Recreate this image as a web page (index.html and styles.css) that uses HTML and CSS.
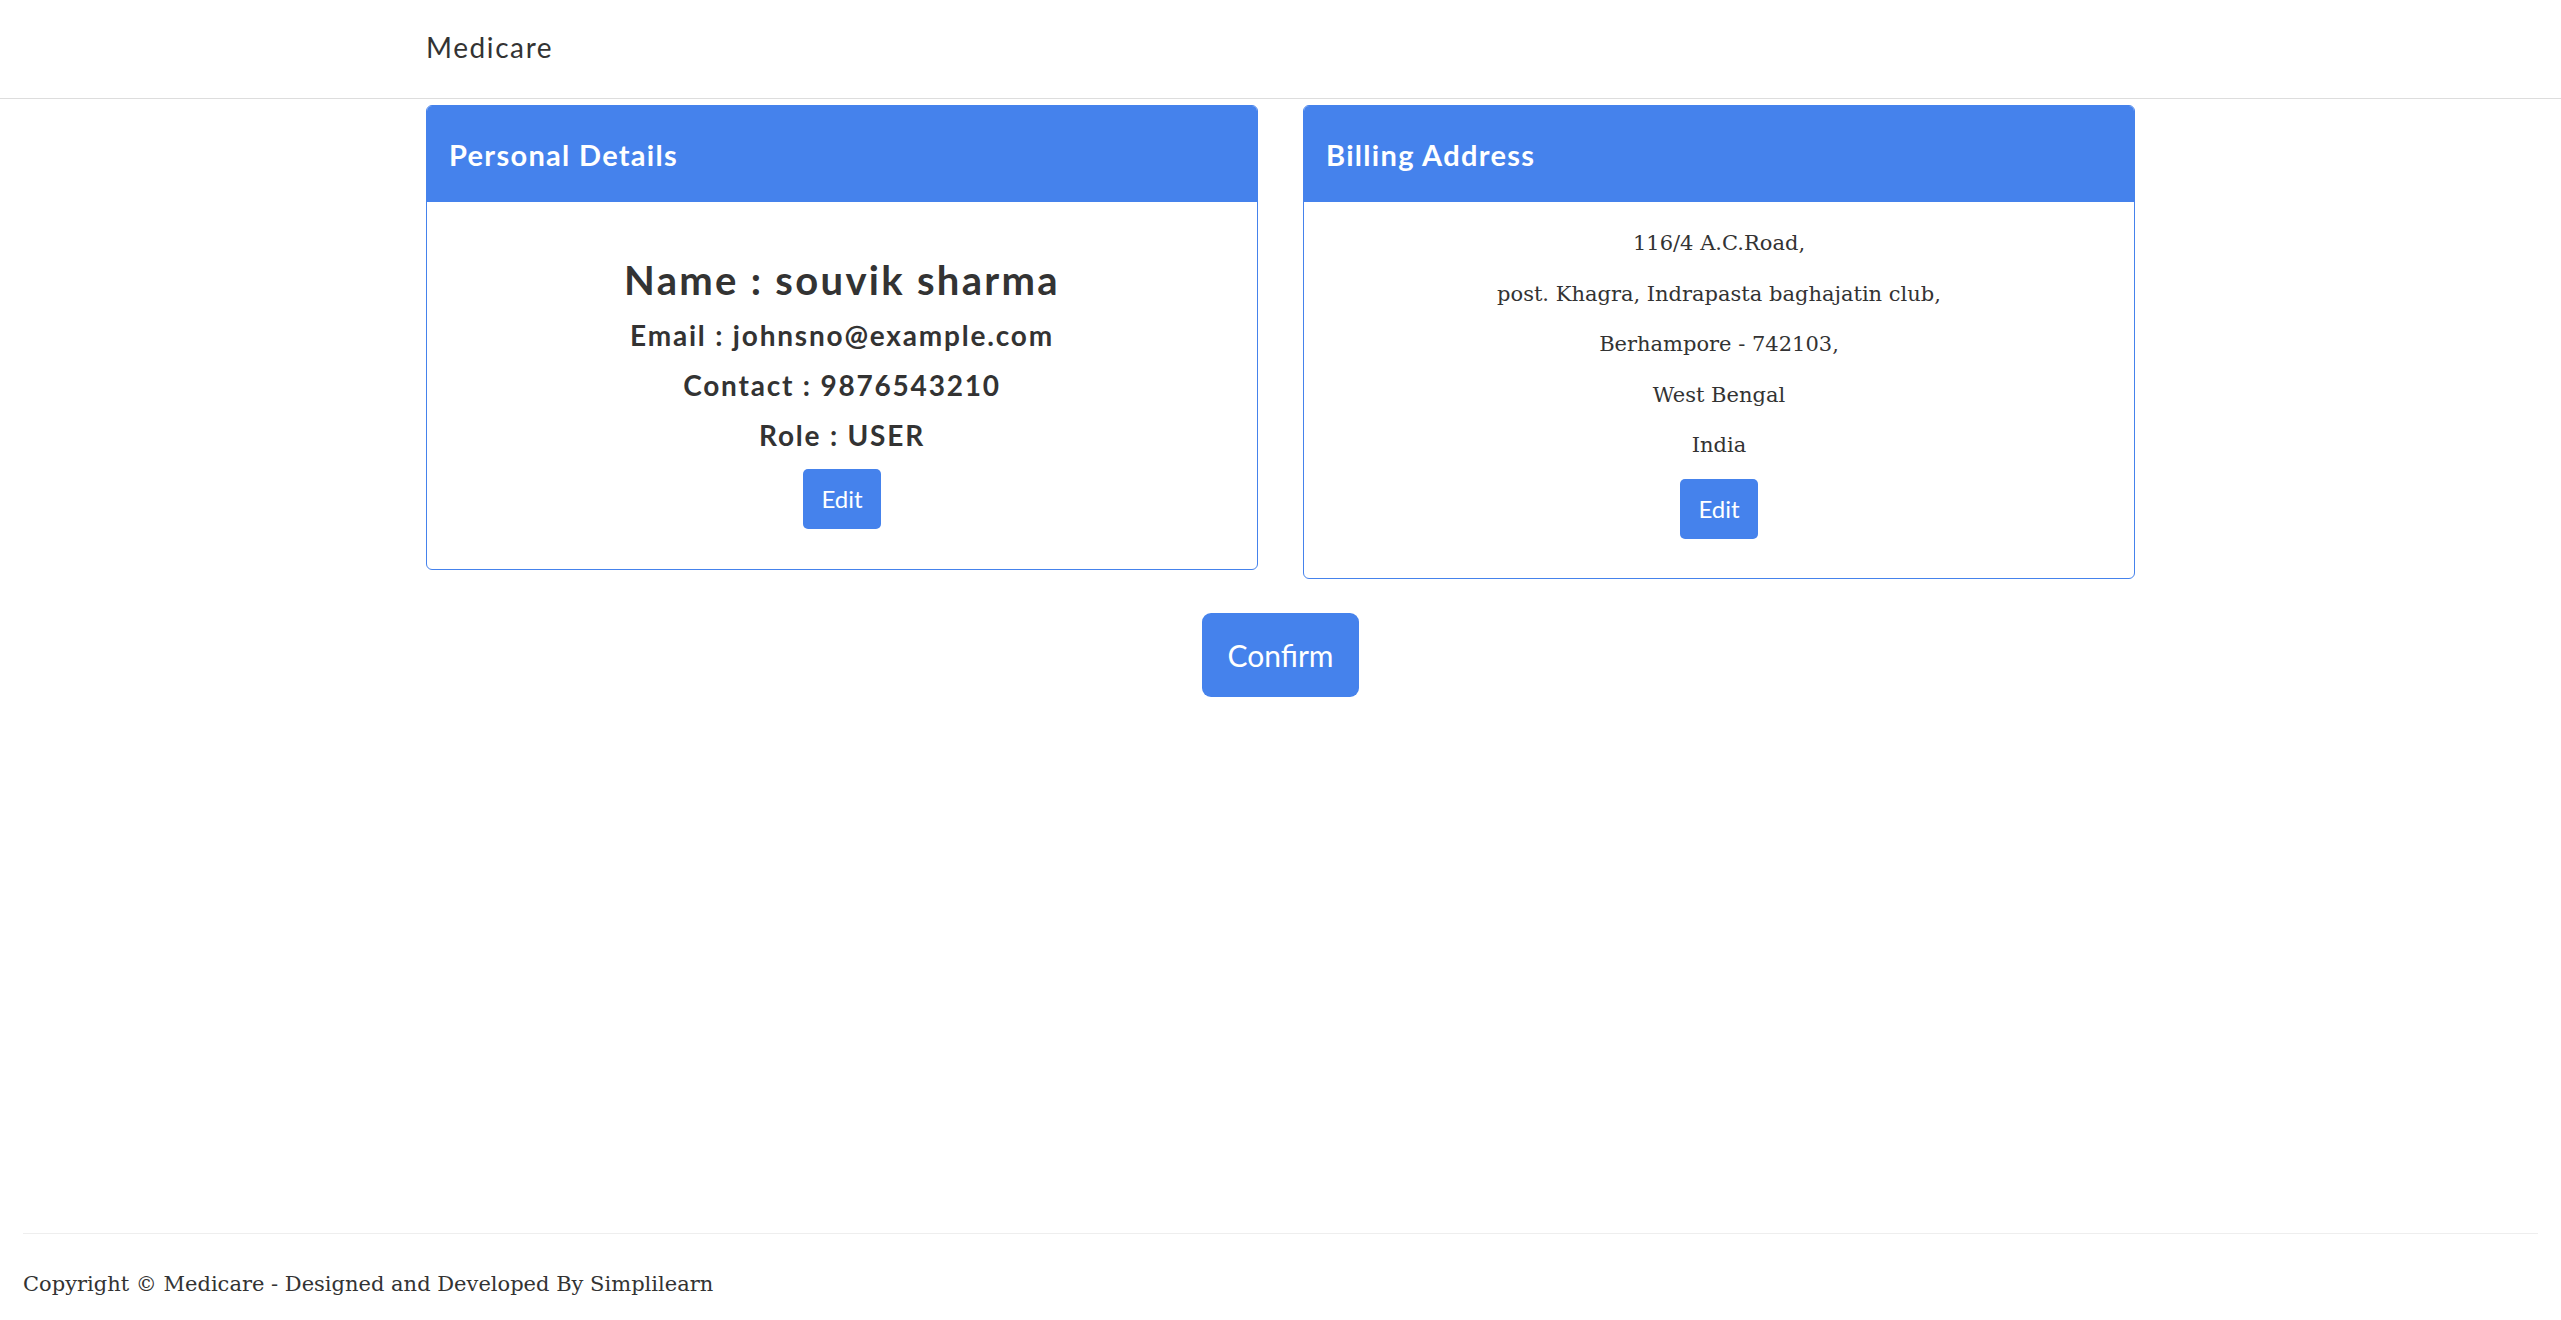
FILE: index.html
```html
<!DOCTYPE html>
<html lang="en">
<head>
<meta charset="utf-8">
<title>Medicare - Confirm</title>
<link rel="stylesheet" href="styles.css">
</head>
<body>
<nav class="navbar">
  <div class="container">
    <a class="brand" href="#">Medicare</a>
  </div>
</nav>
<main class="container main">
  <div class="row">
    <section class="card">
      <div class="card-header"><h3 class="card-title">Personal Details</h3></div>
      <div class="card-body personal">
        <h3 class="name">Name : souvik sharma</h3>
        <h4 class="info">Email : johnsno@example.com</h4>
        <h4 class="info">Contact : 9876543210</h4>
        <h4 class="info">Role : USER</h4>
        <a class="btn" href="#">Edit</a>
      </div>
    </section>
    <section class="card">
      <div class="card-header"><h3 class="card-title">Billing Address</h3></div>
      <div class="card-body address">
        <p>116/4 A.C.Road,</p>
        <p>post. Khagra, Indrapasta baghajatin club,</p>
        <p>Berhampore - 742103,</p>
        <p>West Bengal</p>
        <p>India</p>
        <a class="btn" href="#">Edit</a>
      </div>
    </section>
  </div>
  <div class="confirm-wrap">
    <a class="btn btn-lg" href="#">Confirm</a>
  </div>
</main>
<footer class="footer">
  <hr class="rule">
  <p class="copy">Copyright © Medicare - Designed and Developed By Simplilearn</p>
</footer>
</body>
</html>
```
FILE: styles.css
```css
html, body {
  margin: 0;
  padding: 0;
}
body {
  font-family: "DejaVu Serif", "Liberation Serif", serif;
  font-size: 21px;
  color: #333333;
  background: #ffffff;
  min-height: 100vh;
  display: flex;
  flex-direction: column;
}
.container {
  width: 1709px;
  margin: 0 auto;
}
.navbar {
  height: 98px;
  border-bottom: 1px solid #dddddd;
  display: flex;
  align-items: center;
}
.brand {
  font-family: Lato, "Open Sans", sans-serif;
  font-size: 28px;
  letter-spacing: 1.6px;
  color: #333333;
  text-decoration: none;
  line-height: 40px;
  display: block;
  margin-top: -4px;
}
.main {
  margin-top: 6px;
}
.row {
  display: grid;
  grid-template-columns: 1fr 1fr;
  column-gap: 45px;
  align-items: start;
}
.card {
  border: 1px solid #4582ec;
  border-radius: 6px;
  overflow: hidden;
  background: #ffffff;
}
.card-header {
  background: #4582ec;
  height: 96px;
  display: flex;
  align-items: center;
  padding: 0 22px;
}
.card-title {
  margin: 0;
  font-family: Lato, "Open Sans", sans-serif;
  font-weight: 700;
  font-size: 29px;
  letter-spacing: 1.3px;
  color: #ffffff;
}
.card-body {
  text-align: center;
}
.personal {
  padding: 58px 20px 40px;
}
.name {
  font-family: Lato, "Open Sans", sans-serif;
  font-weight: 700;
  font-size: 40px;
  letter-spacing: 2.3px;
  line-height: 40px;
  margin: 0 0 18px;
}
.info {
  font-family: Lato, "Open Sans", sans-serif;
  font-weight: 700;
  font-size: 28px;
  letter-spacing: 1.8px;
  line-height: 34px;
  margin: 0 0 16px;
}
.personal .info:last-of-type {
  margin-bottom: 17px;
}
.address {
  padding: 24px 20px 39px;
}
.address p {
  margin: 0 0 16px;
  line-height: 34.5px;
}
.btn {
  display: inline-block;
  background: #4582ec;
  color: #ffffff;
  font-family: Lato, "Open Sans", sans-serif;
  font-size: 24px;
  line-height: 60px;
  padding: 0 18px;
  border-radius: 5px;
  text-decoration: none;
}
.confirm-wrap {
  display: flex;
  justify-content: center;
  margin-top: 34px;
}
.btn-lg {
  font-size: 30px;
  line-height: 84px;
  padding: 0 25px;
  border-radius: 9px;
}
.footer {
  margin-top: auto;
  padding: 0 23px 19px;
}
.rule {
  border: 0;
  border-top: 1px solid #eeeeee;
  margin: 0 0 33px;
}
.copy {
  margin: 0;
  line-height: 34px;
}
```
